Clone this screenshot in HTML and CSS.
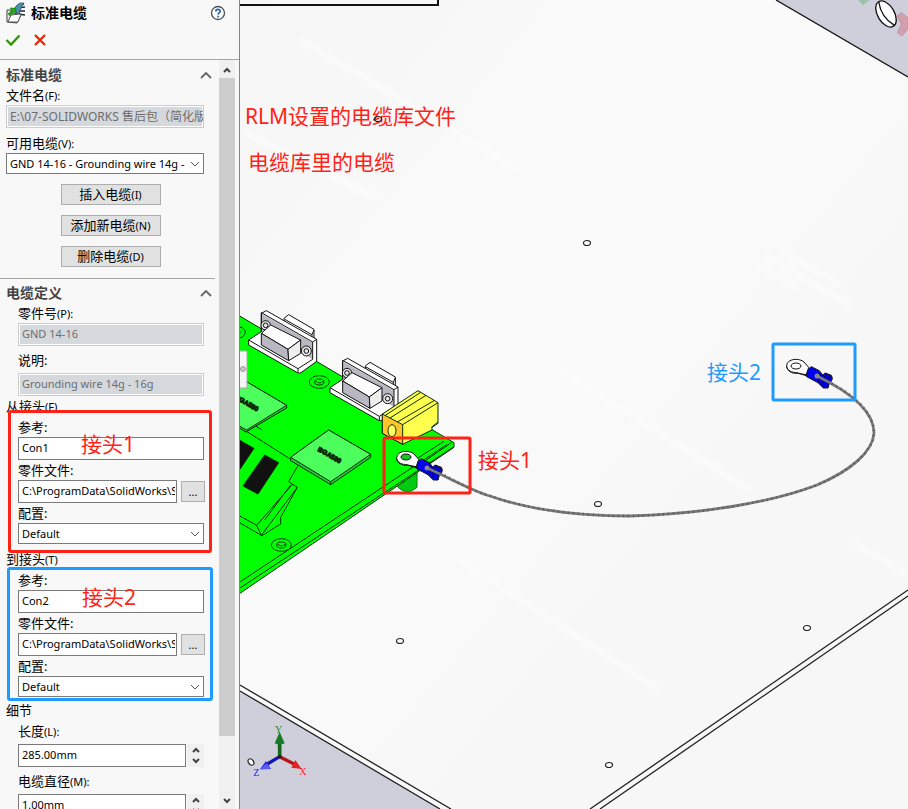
FILE: index.html
```html
<!DOCTYPE html>
<html lang="zh-CN">
<head>
<meta charset="utf-8">
<title>标准电缆</title>
<link rel="stylesheet" href="styles.css">
</head>
<body>
<div class="app">
  <aside class="panel">
    <header class="panel-head">
      <div class="title-row">
        <svg class="title-icon" width="20" height="22" viewBox="0 0 20 22" aria-hidden="true">
          <path d="M13 3 19 2M12 6 20 5M13 9 20 9M13 12l7 1" fill="none" stroke="#1f2a33" stroke-width="1.500"/>
          <path d="M9 9 11 4 15 1 19 1 16 6 14 12 11 11z" fill="#4b8fb4" stroke="#24485c" stroke-width=".7"/>
          <path d="M2 8V20L12 21 16 13 14 11 8 12 6 8z" fill="#e9e9e9" stroke="#444"/>
          <path d="M3 20 6 13 16 12 13 20z" fill="#fff" stroke="#555"/>
          <path d="M3 12 7 8 5 6h6v6L9 10l-4 4z" fill="#27a517" stroke="#176b10" stroke-width=".5"/>
        </svg>
        <h1>标准电缆</h1>
        <button class="icon-btn help" aria-label="帮助">
          <svg width="16" height="16" viewBox="0 0 16 16"><circle cx="8" cy="8" r="6.500" fill="#fff" stroke="#4a4f55" stroke-width="1.300"/><path d="M5.800 6.400C5.800 3.600 10.300 3.700 10.200 6.300 10.100 7.800 8 7.900 8 9.600M8 10.800v1.700" fill="none" stroke="#1b63b0" stroke-width="1.700"/></svg>
        </button>
      </div>
      <div class="confirm-row">
        <button class="icon-btn" aria-label="确定"><svg width="16" height="14" viewBox="0 0 16 14"><path d="M1.500 7 6 11.500 14.500 2.500" fill="none" stroke="#2f9a00" stroke-width="2.400"/></svg></button>
        <button class="icon-btn" aria-label="取消"><svg width="14" height="14" viewBox="0 0 14 14"><path d="M2 2 12 12M12 2 2 12" fill="none" stroke="#e62200" stroke-width="2.200"/></svg></button>
      </div>
    </header>
    <div class="panel-body">
      <form class="fields">
        <section class="section">
          <div class="section-head"><h2>标准电缆</h2><button type="button" class="icon-btn" aria-label="折叠"><svg width="12" height="8" viewBox="0 0 12 8"><path d="M1 7 6 2l5 5" fill="none" stroke="#666" stroke-width="1.800"/></svg></button></div>
          <label for="file">文件名<span class="key">(F):</span></label>
          <input id="file" class="mixed" type="text" value="E:\07-SOLIDWORKS 售后包（简化版）" disabled>
          <label class="spaced" for="cable">可用电缆<span class="key">(V):</span></label>
          <div class="select"><select id="cable"><option>GND 14-16 - Grounding wire 14g - 16g</option></select><svg width="10" height="6" viewBox="0 0 10 6"><path d="M1 1l4 4 4-4" fill="none" stroke="#555"/></svg></div>
          <div class="buttons">
            <button type="button">插入电缆<span class="key">(I)</span></button>
            <button type="button">添加新电缆<span class="key">(N)</span></button>
            <button type="button">删除电缆<span class="key">(D)</span></button>
          </div>
        </section>
        <section class="section ruled">
          <div class="section-head"><h2>电缆定义</h2><button type="button" class="icon-btn" aria-label="折叠"><svg width="12" height="8" viewBox="0 0 12 8"><path d="M1 7 6 2l5 5" fill="none" stroke="#666" stroke-width="1.800"/></svg></button></div>
          <div class="group">
            <label for="part">零件号<span class="key">(P):</span></label>
            <input id="part" type="text" value="GND 14-16" disabled>
            <label class="tall near" for="desc">说明:</label>
            <input id="desc" type="text" value="Grounding wire 14g - 16g" disabled>
          </div>
          <h3>从接头<span class="key">(F)</span></h3>
          <div class="group connector">
            <label for="ref1">参考:</label>
            <input id="ref1" type="text" value="Con1">
            <label for="path1">零件文件:</label>
            <div class="file-row"><input id="path1" type="text" value="C:\ProgramData\SolidWorks\SOLIDWORKS"><button type="button">...</button></div>
            <label for="conf1">配置:</label>
            <div class="select"><select id="conf1"><option>Default</option></select><svg width="10" height="6" viewBox="0 0 10 6"><path d="M1 1l4 4 4-4" fill="none" stroke="#555"/></svg></div>
            <div class="mark mark-red"><span>接头1</span></div>
          </div>
          <h3 class="spaced">到接头<span class="key">(T)</span></h3>
          <div class="group connector">
            <label for="ref2">参考:</label>
            <input id="ref2" type="text" value="Con2">
            <label for="path2">零件文件:</label>
            <div class="file-row"><input id="path2" type="text" value="C:\ProgramData\SolidWorks\SOLIDWORKS"><button type="button">...</button></div>
            <label for="conf2">配置:</label>
            <div class="select"><select id="conf2"><option>Default</option></select><svg width="10" height="6" viewBox="0 0 10 6"><path d="M1 1l4 4 4-4" fill="none" stroke="#555"/></svg></div>
            <div class="mark mark-blue"><span>接头2</span></div>
          </div>
          <h3 class="near">细节</h3>
          <div class="group">
            <label class="tall" for="len">长度<span class="key">(L):</span></label>
            <div class="spin-row"><input id="len" type="text" value="285.00mm"><div class="spin"><button type="button" aria-label="增加"><svg width="8" height="6" viewBox="0 0 8 6"><path d="M1 5l3-3 3 3" fill="none" stroke="#444" stroke-width="2"/></svg></button><button type="button" aria-label="减少"><svg width="8" height="6" viewBox="0 0 8 6"><path d="M1 1l3 3 3-3" fill="none" stroke="#444" stroke-width="2"/></svg></button></div></div>
            <label class="tall near" for="dia">电缆直径<span class="key">(M):</span></label>
            <div class="spin-row"><input id="dia" type="text" value="1.00mm"><div class="spin"><button type="button" aria-label="增加"><svg width="8" height="6" viewBox="0 0 8 6"><path d="M1 5l3-3 3 3" fill="none" stroke="#444" stroke-width="2"/></svg></button><button type="button" aria-label="减少"><svg width="8" height="6" viewBox="0 0 8 6"><path d="M1 1l3 3 3-3" fill="none" stroke="#444" stroke-width="2"/></svg></button></div></div>
          </div>
        </section>
      </form>
      <div class="scrollbar">
        <button type="button" aria-label="向上滚动"><svg width="8" height="6" viewBox="0 0 8 6"><path d="M1 5l3-3 3 3" fill="none" stroke="#444" stroke-width="2"/></svg></button>
        <div class="track"><div class="thumb"></div></div>
        <button type="button" aria-label="向下滚动"><svg width="8" height="6" viewBox="0 0 8 6"><path d="M1 1l3 3 3-3" fill="none" stroke="#444" stroke-width="2"/></svg></button>
      </div>
    </div>
  </aside>

  <main class="scene">
    <svg viewBox="240 0 668 809" preserveAspectRatio="xMinYMin slice" role="img" aria-label="电缆装配模型">
      <defs>
        <linearGradient id="plate" x1="0" y1="0" x2="1" y2="1">
          <stop offset="0" stop-color="#f6f6f6"/><stop offset=".4" stop-color="#fafafa"/><stop offset=".7" stop-color="#f7f7f7"/><stop offset="1" stop-color="#f7f7f7"/>
        </linearGradient>
        <filter id="soft"><feGaussianBlur stdDeviation="2"/></filter>
        <g id="dsub" stroke="#111" stroke-width="3" stroke-linejoin="round">
          <path d="M138 85 152 74 228 118V160L140 115z" fill="#fff"/>
          <path d="M140 88 222 134 228 120M222 134v20" fill="none"/>
          <path d="M32 150 70 125V70L85 62 236 148V214L192 246Q186 252 178 248L32 165z" fill="#fff"/>
          <path d="M72 72 224 158V208L186 185V152L98 105 72 128z" fill="#b9b8c2" stroke="none"/>
          <path d="M70 125V68L224 156 236 148M224 156V208L180 236 32 150M180 236v12" fill="none"/>
          <g fill="#e6e6e9"><circle cx="83" cy="106" r="14"/><circle cx="83" cy="106" r="7"/><circle cx="205" cy="183" r="15"/><circle cx="205" cy="183" r="7"/></g>
          <path d="M70 130 98 105 188 150 150 178z" fill="#fff"/>
          <path d="M70 130 150 178 152 212 70 165z" fill="#b9b8c2"/>
          <path d="M150 178 188 150V190L152 212z" fill="#eee"/>
        </g>
        <g id="boss" fill="none" stroke="#063c06" stroke-width="3"><ellipse rx="30" ry="19"/><ellipse rx="14" ry="9"/><path d="M-11-3Q0 8 12-2"/></g>
        <g id="terminal" stroke="#111" stroke-width="3" stroke-linejoin="round">
          <path d="M-28 0C-28-24 12-24 24-12L38 4 32 26 4 22C-12 24-28 14-28 0z" fill="#fff"/>
          <path d="M-28 2C-26 14-12 20 4 20L32 30" fill="none"/>
          <path d="M46 2 70 14 80 27 88 21 106 28Q114 40 100 52L96 66 82 66 66 50 32 32Q30 12 46 2z" fill="#00e"/>
          <path d="M80 27Q68 35 68 50M92 24Q78 36 82 62M106 30Q90 42 96 66" fill="none"/>
        </g>
        <ellipse id="hole" rx="3.500" ry="2.500" fill="#fff" stroke="#222" stroke-width="1.200"/>
      </defs>

      <rect x="240" width="668" height="809" fill="url(#plate)"/>
      <g stroke="#fff" stroke-width="4" opacity=".6" filter="url(#soft)"><path d="M240 130 380 200M300 40 520 170M750 260 800 290M765 255 850 305M780 250 840 285M560 370 750 490M460 560 660 690M850 540 908 575"/></g>
      <path d="M776 0H908V77z" fill="#cfcedb"/>
      <path d="M776 0 908 77" stroke="#111" stroke-width="1.300"/>
      <path d="M240 691 440 809H240z" fill="#cfcedb"/>
      <g stroke="#222" stroke-width="1.300"><path d="M240 685 451 809M240 691 440 809M590 809 908 590M600 809 908 596"/></g>
      <path d="M240 5H438V0" fill="none" stroke="#111" stroke-width="2"/>

      <g transform="translate(740) scale(.33333)">
        <path d="M354 0h34L370 16z" fill="#9fbfa9"/>
        <path d="M470 48 484 38 504 53V86L486 108 472 98 484 72z" fill="#d0a0ae" stroke="#bd8898" stroke-width="2"/>
        <g transform="rotate(-31 438 42)" stroke="#111" stroke-width="4" fill="#fff"><ellipse cx="438" cy="42" rx="25" ry="43"/><path d="M438 0Q420 42 442 84" fill="none"/></g>
      </g>

      <use href="#hole" x="587" y="243"/><use href="#hole" x="598" y="504"/><use href="#hole" x="400" y="641"/>
      <use href="#hole" x="807" y="628"/><use href="#hole" x="609" y="765"/>
      <use href="#hole" transform="translate(251 762) rotate(55)"/>

      <g transform="translate(238 430) scale(.33333)" stroke="#082b08" stroke-width="3" stroke-linejoin="round">
        <path d="M480 110V172Q508 198 537 172V90z" fill="#0c1" stroke="#087a08"/>
        <path d="M0-345 648 38V52L0 494z" fill="#0f0"/>
        <path d="M0 460 626 44M0 478 648 50M540 84 618 34M556 96 640 38" fill="none"/>
        <path d="M0-12 182 103 152 155 178 172 70 316 0 275M164 162 56 286 0 255M80 270 158 165M56 286 70 316M178 172 128 262V282L70 318M0-8 30-25 70-2" fill="none"/>
        <path d="M0 28 48 55 6 118H0zM80 75 122 98 60 192 15 168z" fill="#111"/>
        <path d="M272 0 398 73V82L278 164 158 92V82z" fill="#27c93a"/>
        <path d="M272 0 398 73 278 155 158 82z" fill="#4cff5c"/>
        <path d="M278 155v9" fill="none"/>
        <text transform="matrix(.86 .5 -.45 .9 238 62)" class="chip">BGA580</text>
        <use href="#boss" x="130" y="345"/>
      </g>

      <g transform="translate(238 290) scale(.33333)" stroke="#082b08" stroke-width="3" stroke-linejoin="round">
        <path d="M0 260 146 346V354L24 426 0 412z" fill="#27c93a"/>
        <path d="M0 260 146 346 26 420 0 406z" fill="#4cff5c"/>
        <text transform="matrix(.86 .5 -.45 .9 -10 326)" class="chip">BGA580</text>
        <use href="#boss" x="244" y="276"/><use href="#boss" x="-8" y="127"/>
        <use href="#dsub"/><use href="#dsub" x="244" y="143"/>
        <path d="M433 372 540 302 600 338V400L582 412V420L494 463 433 430z" fill="#ffff4d"/>
        <path d="M433 372 494 404V463L433 430z" fill="#ffc52b"/>
        <path d="M494 404 600 338M442 376 548 307M456 384 564 316M478 396 590 331M580 412 600 396" fill="none"/>
        <ellipse cx="462" cy="422" rx="12" ry="18" fill="#ff6"/>
      </g>

      <use href="#terminal" transform="translate(406 458) scale(.33333)"/>
      <use href="#terminal" transform="translate(796 366) scale(.33333)"/>
      <ellipse cx="406" cy="457" rx="5" ry="3" fill="#16c51d" stroke="#111"/>
      <ellipse cx="796" cy="366" rx="5" ry="3" fill="#fff" stroke="#111"/>
      <path d="M427 468C450 478 470 490 490 496 530 510 580 516 630 516 700 514 770 503 817 485 850 471 873 452 874 433 874 412 852 393 817 376" fill="none" stroke="#777" stroke-width="2.800"/>
      <path d="M440 473C460 483 470 490 490 496 530 510 580 516 630 516 700 514 770 503 817 485 850 471 873 452 874 433 874 412 852 393 830 383" fill="none" stroke="#444" stroke-width="2.800" stroke-dasharray="1 4" opacity=".6"/>
      <circle cx="427" cy="468" r="2.500" fill="#888"/><circle cx="817" cy="376" r="2.500" fill="#888"/>

      <path d="M239 351H247V388H239z" fill="#f5f5f5" stroke="#aaa"/>
      <circle cx="243" cy="369" r="2.500" fill="#ccc" stroke="#999"/>

      <g transform="translate(238 680) scale(.33333)">
        <path d="M125 230V185" stroke="#17661f" stroke-width="11"/><path d="M110 190 125 156 140 190Q125 198 110 190z" fill="#1b7a25"/>
        <path d="M125 230 88 252" stroke="#1515b0" stroke-width="10"/><path d="M84 243 66 268 99 267z" fill="#2525df"/><path d="M66 268 86 250 99 267z" fill="#5a5af5"/>
        <path d="M125 230 168 252" stroke="#b81414" stroke-width="10"/><path d="M172 240 191 267 160 263z" fill="#e02222"/>
        <circle cx="125" cy="230" r="6" fill="#24242c"/>
        <g class="axis"><text x="111" y="158" fill="#178a20">Y</text><text x="46" y="287" fill="#22f">Z</text><text x="184" y="284" fill="#f22">X</text></g>
      </g>

      <rect x="384" y="438" width="86" height="55" rx="1" fill="none" stroke="#ff2317" stroke-width="3"/>
      <rect x="773" y="344" width="82" height="56" rx="1" fill="none" stroke="#1e9bff" stroke-width="3"/>
      <g class="note"><text x="245" y="124">RLM设置的电缆库文件</text><text x="248" y="170">电缆库里的电缆</text><text x="478" y="468">接头1</text><text class="blue" x="707" y="380">接头2</text></g>
      <ellipse cx="378" cy="119" rx="3.500" ry="2.500" fill="none" stroke="#222" stroke-width="1.200"/>
    </svg>
  </main>
</div>
</body>
</html>
```
FILE: styles.css
```css
* { box-sizing: border-box; }
body { margin: 0; background: #f8f8f8; color: #000; font: 13px/20px "Noto Sans", "Noto Sans CJK SC", sans-serif; }
button, input, select { font: inherit; color: inherit; margin: 0; }
h1, h2, h3 { margin: 0; font-size: 14px; line-height: 20px; }

.app { display: flex; height: 100vh; overflow: hidden; }
.panel { flex: 0 0 240px; display: flex; flex-direction: column; border-right: 1px solid #858585; background: #f8f8f8; }
.panel-head { height: 60px; padding: 2px 13px 0 5px; border-bottom: 1px solid #a6a6a6; }
.title-row { display: flex; align-items: center; gap: 6px; height: 22px; }
.help { margin-left: auto; }
.confirm-row { display: flex; align-items: center; gap: 12px; height: 32px; }
.icon-btn { display: flex; padding: 0; border: 0; background: none; }

.panel-body { flex: 1; min-height: 0; display: flex; justify-content: space-between; padding-right: 4px; }
.fields { width: 215px; overflow: hidden; }
.section { padding: 5px 11px 0 6px; }
.section-head { display: flex; align-items: center; justify-content: space-between; height: 20px; margin-right: -8px; }
.section h2 { color: #444; }
.section h3 { font-size: 13px; font-weight: 400; }
.ruled { margin-top: 11px; border-top: 1px solid #a6a6a6; padding-top: 4px; }
label { display: block; height: 20px; }
label.tall { height: 24px; padding-top: 1px; }
.spaced { margin-top: 5px; }
.near { margin-top: 3px; }
.key { font-size: 11px; }
.group { padding-left: 12px; }

input { display: block; width: 100%; height: 23px; padding: 0 1px 2px 3px; border: 1px solid #7a7a7a; background: #fff; font-size: 11px; }
input:disabled { border: 1px solid #ccc; box-shadow: inset 0 0 0 1px #fff; background: #d5d9de; color: #6d6d6d; }
.mixed { padding-right: 0; font-size: 12px; }
.select { position: relative; }
select { display: block; width: 100%; height: 21px; padding: 0 18px 0 3px; border: 1px solid #7a7a7a; border-radius: 0; background: #fff; font-size: 11px; line-height: 18px; appearance: none; }
.select svg { position: absolute; right: 4px; top: 8px; pointer-events: none; }
.buttons { display: flex; flex-direction: column; align-items: center; gap: 10px; margin: 10px 0 0 11px; }
.buttons button { width: 100px; height: 21px; padding: 0; border: 1px solid #adadad; background: #e1e1e1; line-height: 18px; }
.file-row { display: flex; gap: 4px; margin-right: -1px; }
.file-row input { flex: 1; min-width: 0; }
.file-row button { width: 24px; height: 21px; margin-top: 1px; padding: 0; border: 1px solid #adadad; background: #e1e1e1; font-size: 11px; line-height: 18px; }
.spin-row { display: flex; gap: 1px; }
.spin-row input { flex: 1; min-width: 0; }
.spin { width: 17px; display: flex; flex-direction: column; }
.spin button { flex: 1; display: flex; align-items: center; justify-content: center; padding: 0; border: 0; background: #f0f0f0; }

.connector { position: relative; }
.mark { position: absolute; border: 3px solid #ff2317; border-radius: 3px; color: #ff2317; font-size: 21px; line-height: 24px; pointer-events: none; }
.mark span { position: absolute; left: 70px; top: 19px; white-space: nowrap; }
.mark-red { inset: -7px -8px -9px 2px; }
.mark-blue { inset: -3px -9px -4px 1px; border-color: #1e9bff; }
.mark-blue span { left: 72px; top: 15px; }

.scrollbar { width: 16px; display: flex; flex-direction: column; padding-top: 2px; background: #f0f0f0; }
.scrollbar button { height: 16px; display: flex; align-items: center; justify-content: center; padding: 0; border: 0; background: none; }
.track { flex: 1; }
.thumb { height: 92%; background: #cdcdcd; }

.scene { flex: 1; min-width: 0; overflow: hidden; }
.scene svg { display: block; width: 100%; height: 100%; }
.note { font-size: 21px; fill: #ff2317; }
.note .blue { fill: #1e9bff; }
.axis { font: 30px "Liberation Serif", serif; }
.chip { font: bold 20px "Liberation Sans", sans-serif; fill: #082b08; }
```
